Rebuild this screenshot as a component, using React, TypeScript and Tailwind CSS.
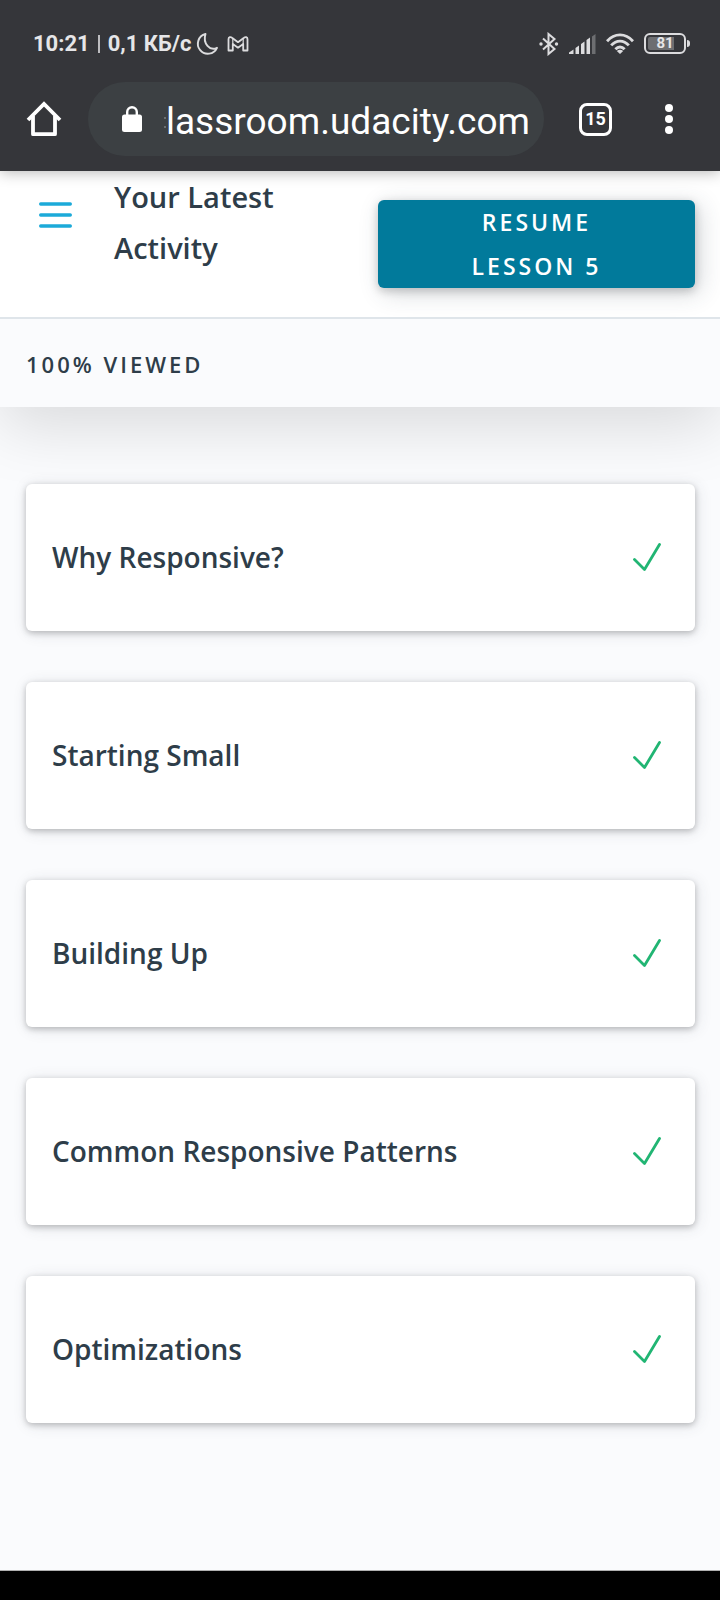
const lessons = [
  "Why Responsive?",
  "Starting Small",
  "Building Up",
  "Common Responsive Patterns",
  "Optimizations",
];

function MoonIcon() {
  return (
    <svg className="h-6 w-6" viewBox="0 0 24 24" fill="none" stroke="#dcdcde" strokeWidth="1.9" strokeLinejoin="round">
      <path d="M10.500 2A10 10 0 1 0 22 15.800C15 19.500 7.500 11.500 10.500 2Z" />
    </svg>
  );
}

function MailIcon() {
  return (
    <svg className="h-4 w-[22px]" viewBox="0 0 22 16" fill="none" stroke="#dcdcde" strokeWidth="1.8" strokeLinejoin="round">
      <path d="M1.500 3.200C1.500 .8 3.600.6 5 1.700L11 6.200 17 1.700C18.400.6 20.500.8 20.500 3.200V14.500H16.200V8L11 11.700 5.800 8V14.500H1.500Z" />
      <path d="M5.800 8V3M16.200 8V3" strokeWidth="1.200" />
    </svg>
  );
}

function BluetoothIcon() {
  return (
    <svg className="h-6 w-5" viewBox="0 0 20 24" fill="none" stroke="#dcdcde" strokeWidth="2">
      <path d="M4 6.500 15.500 17 9.500 22V2L15.500 7 4 17.500" />
      <circle cx="2" cy="12" r="1.700" fill="#dcdcde" stroke="none" />
      <circle cx="17.500" cy="12" r="1.700" fill="#dcdcde" stroke="none" />
    </svg>
  );
}

function SignalIcon() {
  return (
    <svg className="h-5 w-[27px]" viewBox="0 0 27 20" fill="#dcdcde">
      <path d="M0 20V18.500L4.500 15.500V20ZM6.500 14 10 11.500V20H6.500ZM12 10 15.500 7.500V20H12ZM17.500 6 21 3.500V20H17.500Z" />
      <path d="M23 2.500 26.500 0V20H23Z" fill="#6d6e71" />
    </svg>
  );
}

function WifiIcon() {
  return (
    <svg className="h-[21px] w-7" viewBox="0 0 28 21" fill="none" stroke="#dcdcde" strokeWidth="2.900">
      <path d="M1 8.200C8.500-.2 19.500-.2 27 8.200M5.200 12.400C10.300 6.700 17.700 6.700 22.800 12.400M9.400 16.200C12.200 13.200 15.800 13.200 18.600 16.200" />
      <path d="M10.800 18C12.800 16.400 15.200 16.400 17.200 18L14 21Z" fill="#dcdcde" stroke="none" />
    </svg>
  );
}

function Battery() {
  return (
    <div className="flex items-center gap-px">
      <div className="flex h-[21px] w-[42px] items-center justify-center rounded-md border-2 border-[#dcdcde] p-[2px]">
        <div className="flex h-full w-full items-center justify-center rounded-xs bg-linear-to-r from-[#6d6e71] from-75% to-transparent to-75% text-[15px] leading-none font-bold text-[#e6e6e8]">
          81
        </div>
      </div>
      <div className="h-[7px] w-[3px] rounded-r-sm bg-[#dcdcde]" />
    </div>
  );
}

function StatusBar() {
  return (
    <div className="flex h-[82px] items-center justify-between pt-[5px] pr-[30px] pl-[33px]">
      <div className="flex items-center gap-1 text-[22px] leading-none font-bold text-[#e6e6e8]">
        <div className="flex items-center gap-2">
          <span>10:21</span>
          <span className="h-[18px] w-[2px] bg-[#bdbdc0]" />
          <span>0,1 КБ/с</span>
        </div>
        <div className="flex items-center gap-2">
          <MoonIcon />
          <MailIcon />
        </div>
      </div>
      <div className="flex items-center gap-[10px]">
        <BluetoothIcon />
        <SignalIcon />
        <WifiIcon />
        <Battery />
      </div>
    </div>
  );
}

function BrowserBar() {
  return (
    <div className="flex items-center pr-[47px] pb-[15px] pl-[26px]">
      <button type="button" aria-label="Home" className="mr-[26px]">
        <svg className="h-9 w-9" viewBox="0 0 36 36" fill="none" stroke="#fff" strokeWidth="3.800" strokeLinejoin="round">
          <path d="M2 19 18 3 34 19" strokeLinejoin="miter" />
          <path d="M7 15V33.200H29V15" />
        </svg>
      </button>
      <div className="flex h-[74px] min-w-0 flex-1 items-center rounded-full bg-[#3c4043] pr-4 pl-[34px]">
        <svg className="h-[26px] w-5 shrink-0" viewBox="0 0 20 26" fill="#fff">
          <rect y="8.500" width="20" height="17.500" rx="2.500" />
          <path d="M5.200 10V6A4.800 4.800 0 0 1 14.800 6V10" fill="none" stroke="#fff" strokeWidth="2.400" />
        </svg>
        <svg className="mt-2 ml-[22px] h-3 w-[2px] shrink-0" viewBox="0 0 2 12" fill="#6b6f72">
          <rect width="2" height="2" />
          <rect y="9" width="2" height="2" />
        </svg>
        <input
          type="text"
          aria-label="Address"
          defaultValue="lassroom.udacity.com"
          className="min-w-0 flex-1 bg-transparent pt-[6px] text-[37px] text-white outline-none"
        />
      </div>
      <button
        type="button"
        aria-label="Open tabs"
        className="ml-[35px] flex h-[33px] w-[33px] items-center justify-center rounded-lg border-3 border-white text-[18px] leading-none font-bold text-white"
      >
        15
      </button>
      <button type="button" aria-label="Menu" className="ml-[53px]">
        <svg className="h-[30px] w-2" viewBox="0 0 8 30" fill="#fff">
          <circle cx="4" cy="4" r="4" />
          <circle cx="4" cy="15" r="4" />
          <circle cx="4" cy="26" r="4" />
        </svg>
      </button>
    </div>
  );
}

function CheckIcon() {
  return (
    <svg className="h-7 w-7" viewBox="0 0 28 28" fill="none" stroke="#21b573" strokeWidth="2.800" strokeLinecap="round" strokeLinejoin="round">
      <path d="M1.500 16.500 11.500 26.500 26.500 1.500" />
    </svg>
  );
}

export default function App() {
  return (
    <div className="flex min-h-screen flex-col bg-[#fafbfd] font-['Open_Sans',sans-serif] text-[#2e3d49]">
      <div className="relative z-20 bg-[#35363a] font-[Roboto,sans-serif] shadow-[0_1px_14px_rgba(0,0,0,0.3)]">
        <StatusBar />
        <BrowserBar />
      </div>

      <div className="relative z-10 shadow-[0_20px_60px_rgba(0,0,0,0.13)]">
        <header className="flex items-start border-b-2 border-[#dfe5ea] bg-white pr-[25px] pb-[29px] pl-[39px]">
          <button type="button" aria-label="Open navigation" className="mt-[31px]">
            <svg className="h-[26px] w-[33px]" viewBox="0 0 33 26" stroke="#1caad9" strokeWidth="3.400" strokeLinecap="round">
              <path d="M1.700 2H31.300M1.700 13H31.300M1.700 24H31.300" />
            </svg>
          </button>
          <h1 className="ml-[42px] flex-1 text-[29px] leading-[51px] font-semibold">
            Your Latest
            <br />
            Activity
          </h1>
          <button
            type="button"
            className="mt-[29px] w-[317px] rounded-md bg-[#017a9b] px-20 text-[23px] leading-[44px] font-semibold tracking-[3px] text-white uppercase shadow-[5px_5px_25px_rgba(46,61,73,0.2),0_3px_10px_rgba(0,0,0,0.2)]"
          >
            Resume Lesson 5
          </button>
        </header>
        <p className="bg-[#fafbfd] px-[26px] pt-[25px] pb-[23px] text-[22px] leading-[40px] font-semibold tracking-[3px] uppercase">
          100% Viewed
        </p>
      </div>

      <main className="flex-1 pt-[77px] pr-[25px] pb-[146px] pl-[26px]">
        <ul className="flex flex-col gap-[51px]">
          {lessons.map((lesson) => (
            <li key={lesson}>
              <a
                href="#"
                className="relative z-10 flex h-[147px] items-center justify-between rounded-md bg-white pr-[34px] pb-[2px] pl-[26px] text-[28px] font-semibold shadow-[2px_2px_16px_rgba(46,61,73,0.12),0_2px_6px_rgba(0,0,0,0.24)]"
              >
                {lesson}
                <CheckIcon />
              </a>
            </li>
          ))}
        </ul>
      </main>

      <footer className="h-[30px] border-t border-[#b0b0b0] bg-black" />
    </div>
  );
}
